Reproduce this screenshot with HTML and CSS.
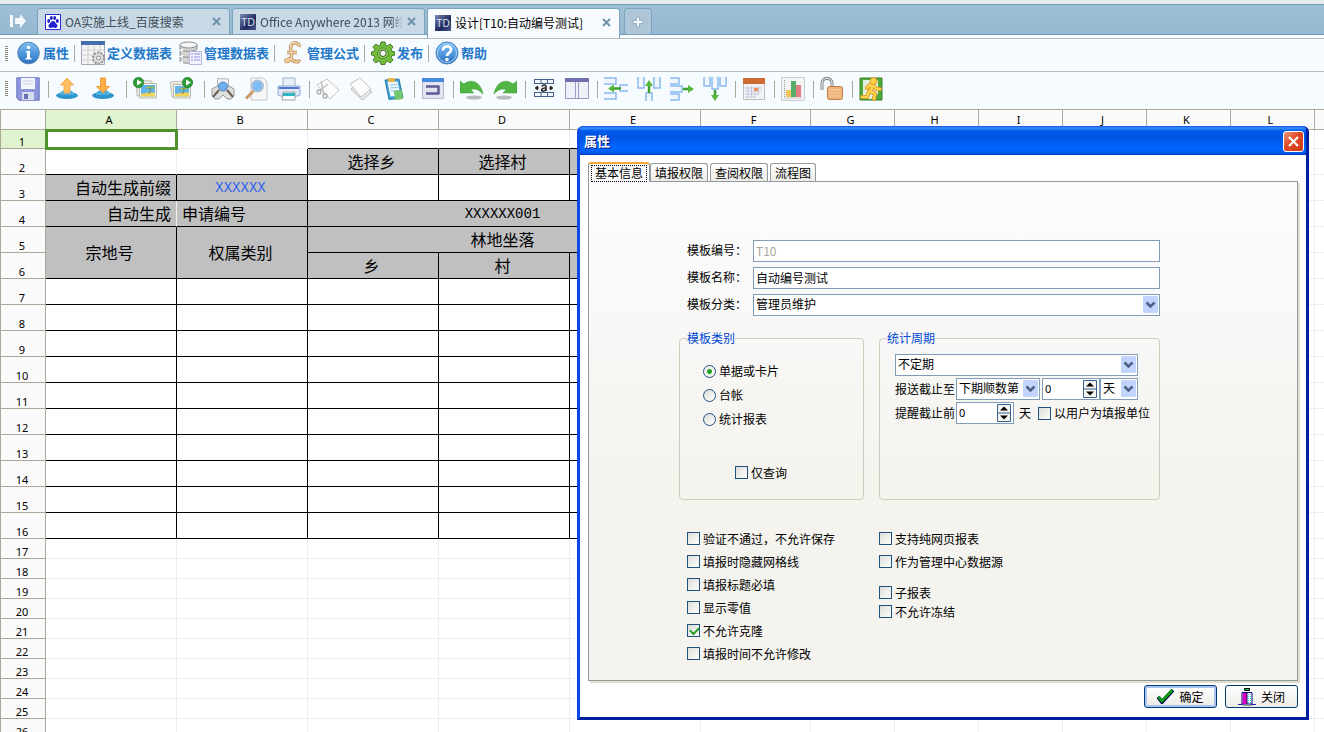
FILE: index.html
```html
<!DOCTYPE html>
<html lang="zh-CN">
<head>
<meta charset="utf-8">
<title>设计[T10:自动编号测试]</title>
<link rel="stylesheet" href="styles.css">
</head>
<body>
<nav class="tabbar">
  <button class="tabbar-toggle" aria-label="展开"><svg width="16" height="14" viewBox="0 0 16 14"><path d="M0 1h3v12H0zM5 4h5V0l6 7-6 7v-4H5z" fill="#f4f8fb"/></svg></button>
  <div class="tab">
    <svg width="16" height="16" viewBox="0 0 16 16"><path fill="#fff" stroke="#2a2ad6" d="M.5.5h15v15H.5z"/><g fill="#2222d0"><ellipse cx="3.7" cy="7" rx="1.5" ry="2"/><ellipse cx="6.3" cy="4" rx="1.5" ry="2"/><ellipse cx="9.7" cy="4" rx="1.5" ry="2"/><ellipse cx="12.3" cy="7" rx="1.5" ry="2"/><path d="M8 7c2 0 2.400 2 3.800 3.300 1.500 1.500.4 3.700-1.300 3.700-1 0-1.500-.4-2.500-.4s-1.500.4-2.500.4c-1.700 0-2.800-2.200-1.300-3.700C5.600 9 6 7 8 7z"/></g></svg>
    <span class="tab-title">OA实施上线_百度搜索</span>
    <button class="tab-close" aria-label="关闭标签"><svg width="9" height="9" viewBox="0 0 9 9"><path d="M1 1l7 7M8 1L1 8" stroke="#6c92aa" stroke-width="2"/></svg></button>
  </div>
  <div class="tab">
    <span class="td-logo">TD</span>
    <span class="tab-title tab-fade">Office Anywhere 2013 网络</span>
    <button class="tab-close" aria-label="关闭标签"><svg width="9" height="9" viewBox="0 0 9 9"><path d="M1 1l7 7M8 1L1 8" stroke="#6c92aa" stroke-width="2"/></svg></button>
  </div>
  <div class="tab tab-active">
    <span class="td-logo">TD</span>
    <span class="tab-title">设计[T10:自动编号测试]</span>
    <button class="tab-close" aria-label="关闭标签"><svg width="9" height="9" viewBox="0 0 9 9"><path d="M1 1l7 7M8 1L1 8" stroke="#6c92aa" stroke-width="2"/></svg></button>
  </div>
  <button class="tab-new" aria-label="新标签"><svg width="12" height="12" viewBox="0 0 12 12"><path d="M4.500 1h3v3.500H11v3H7.500V11h-3V7.500H1v-3h3.500z" fill="#f1f6fa" stroke="#7896ab" stroke-width=".6"/></svg></button>
</nav>

<div class="toolbar toolbar-text">
  <span class="grip"></span>
  <button class="tool"><svg class="icon" viewBox="0 0 24 24"><defs><linearGradient id="blue" x1="0" y1="0" x2="0" y2="1"><stop offset="0" stop-color="#7cc0f4"/><stop offset="1" stop-color="#2a72c4"/></linearGradient></defs><circle cx="11.500" cy="12" r="10.800" fill="url(#blue)" stroke="#5a84ae"/><circle cx="11.500" cy="6.500" r="1.800" fill="#fff"/><path d="M9 10h4v7h1.500v1.500h-6V17H10v-5.500H9z" fill="#fff"/></svg>属性</button>
  <span class="sep"></span>
  <button class="tool"><svg class="icon" viewBox="0 0 24 24"><path d="M.5.500h23v23H.5z" fill="#f4f4f4" stroke="#a5acb8"/><path d="M0 0h24v4H0z" fill="#456fae"/><path d="M1 9h22M1 14h22M1 19h22M7 4v19M13 4v19M19 4v19" stroke="#cfcfcf"/><g transform="translate(17.500 17)"><circle r="5.500" fill="#cfcfcf" stroke="#8d8d8d" stroke-width="2" stroke-dasharray="2 1.400"/><circle r="4.500" fill="#dedede"/><circle r="2" fill="#f6f6f6" stroke="#8a8a8a"/></g></svg>定义数据表</button>
  <button class="tool"><svg class="icon" viewBox="0 0 24 24"><g fill="#d3d3d3" stroke="#8c8c8c"><path d="M2 16v4c0 3 17 3 17 0v-4"/><path d="M2 10v4c0 3 17 3 17 0v-4"/><path d="M2 4v4c0 3 17 3 17 0V4"/><ellipse cx="10.500" cy="4" rx="8.500" ry="3" fill="#f5f5f5"/></g><path d="M4 8v2M4 14v2M4 20v2" stroke="#fff" stroke-width="2"/><path d="M11.500 10.500h12v13h-12z" fill="#f3f3ff" stroke="#b5b5df"/><path d="M13 13h2M13 16h2M13 19h2M16 13h6M16 16h6M16 19h6" stroke="#8d8de0"/></svg>管理数据表</button>
  <span class="sep"></span>
  <button class="tool"><svg class="icon" viewBox="0 0 24 24"><path d="M18 6c1-5-8-6-8.500 0 0 4 2.500 7 .5 11-1 2-4 5-5 3s4-3 7-.5c3 2 6 2 6-1M6 11.500h10" fill="none" stroke="#b08250" stroke-width="3.400"/><path d="M18 6c1-5-8-6-8.500 0 0 4 2.500 7 .5 11-1 2-4 5-5 3s4-3 7-.5c3 2 6 2 6-1M6 11.500h10" fill="none" stroke="#f2cd9d" stroke-width="2"/></svg>管理公式</button>
  <span class="sep"></span>
  <button class="tool"><svg class="icon" viewBox="0 0 24 24"><path d="M10 1h4l.6 3 2 .8L19.200 3 22 5.800l-1.800 2.600.8 2 3 .6v3l-3 .6-.8 2 1.800 2.600-2.800 2.800-2.600-1.800-2 .8-.6 2.500h-4l-.6-2.500-2-.8L4.800 22 2 19.200l1.800-2.600-.8-2-2.500-.6v-3l2.500-.6.8-2L2 5.800 4.800 3l2.600 1.800 2-.8z" fill="#72bb3c" stroke="#447a2a"/><circle cx="12" cy="12.300" r="5.500" fill="#8ed052" stroke="#4a8a2e"/><circle cx="12" cy="12.300" r="3.200" fill="#f6fbff" stroke="#36561f"/></svg>发布</button>
  <span class="sep"></span>
  <button class="tool"><svg class="icon" viewBox="0 0 24 24"><circle cx="12" cy="12" r="11" fill="url(#blue)" stroke="#4b83bd"/><circle cx="12" cy="12" r="9.500" fill="none" stroke="#a8d7f7"/><path d="M8 9.500C7.500 4 16.500 4 16 9c-.2 3-4 3-4 6" fill="none" stroke="#fff" stroke-width="2.800"/><circle cx="12" cy="18.500" r="1.700" fill="#fff"/></svg>帮助</button>
</div>

<div class="toolbar toolbar-icons">
  <span class="grip"></span>
  <div class="group group-first">
    <button class="ibtn" aria-label="保存"><svg class="icon" viewBox="0 0 24 24"><path d="M.8.800h22.400v22.400H3L.8 21z" fill="#8f97dc" stroke="#6c74bd"/><path d="M5 1h14v11H5z" fill="#f4f6fb"/><path d="M7 4h10M7 7h10" stroke="#c9cfe4"/><path d="M6 15h12v8H6z" fill="#d9dcee"/><path d="M8 17h4v5H8z" fill="#6770b4"/></svg></button>
  </div>
  <div class="group">
    <button class="ibtn ibtn-wide" aria-label="上传"><svg class="icon" viewBox="0 0 24 24"><ellipse cx="12" cy="18.500" rx="11" ry="3.500" fill="#2d93cb"/><path d="M5 18c0-7 14-7 14 0" fill="#4fb0e2"/><path d="M12 1l6.500 7H15v8H9V8H5.500z" fill="#ffbf62" stroke="#f3a23d" stroke-width=".8"/></svg></button>
    <button class="ibtn ibtn-wide" aria-label="下载"><svg class="icon" viewBox="0 0 24 24"><ellipse cx="12" cy="18.500" rx="11" ry="3.500" fill="#2d93cb"/><path d="M5 18c0-7 14-7 14 0" fill="#4fb0e2"/><path d="M9.500 1h5v8.500h4L12 16 5.500 9.500h4z" fill="#ffad45" stroke="#ee8e22" stroke-width=".8"/></svg></button>
  </div>
  <div class="group">
    <button class="ibtn ibtn-wide" aria-label="导入图片"><svg class="icon" viewBox="0 0 24 24"><path d="M3 3l16 1-1 14-14 1z" fill="#e9e9e2" stroke="#c4c4bc"/><path d="M6.500 6.500h17V21h-17z" fill="#f6f6f0" stroke="#b8b8b0"/><path d="M8 8h14v11.500H8z" fill="#62b4ec"/><path d="M8 17c5-1 10-2 14-1v3.500H8z" fill="#f0d358"/><path d="M17.500 11c0 2-.5 4-1.500 6" stroke="#7c7a2c" fill="none"/><path d="M13.500 12c.5-3 3-3 4-1.500 1-2 3.500-1 3.500 1-1.500-1-2.500-1-3.500-.5-1-.5-2.500 0-4 1z" fill="#d9e04a" stroke="#6d8f2a" stroke-width=".5"/><circle cx="5.500" cy="5.500" r="5.200" fill="#2c9d35" stroke="#167522" stroke-width=".6"/><path d="M4 2.500l5 3-5 3z" fill="#fff"/></svg></button>
    <button class="ibtn ibtn-wide" aria-label="导出图片"><svg class="icon" viewBox="0 0 24 24"><path d="M1 5l16-1v14L3 20z" fill="#e9e9e2" stroke="#c4c4bc"/><path d="M4.500 7.500h17V21h-17z" fill="#f6f6f0" stroke="#b8b8b0"/><path d="M6 9h14v10.500H6z" fill="#62b4ec"/><path d="M6 17c5-1 10-2 14-1v3.500H6z" fill="#f0d358"/><path d="M15 12c0 2-.5 3-1.500 5" stroke="#7c7a2c" fill="none"/><path d="M11 13c.5-3 3-3 4-1.500 1-2 3.500-1 3.500 1-1.500-1-2.500-1-3.500-.5-1-.5-2.500 0-4 1z" fill="#d9e04a" stroke="#6d8f2a" stroke-width=".5"/><circle cx="18.500" cy="5.500" r="5.200" fill="#2c9d35" stroke="#167522" stroke-width=".6"/><path d="M17 2.500l5 3-5 3z" fill="#fff"/></svg></button>
  </div>
  <div class="group">
    <button class="ibtn" aria-label="打印预览"><svg class="icon" viewBox="0 0 24 24"><path d="M1 12l5-3h12l5 3v7l-3 3h-4l-4-4-4 4H4l-3-3z" fill="#dedede" stroke="#9a9a9a"/><path d="M6.500 10V1.500L17.500 2v8z" fill="#f4f4f4" stroke="#b5b5b5"/><path d="M8 13l-6 7M16 13l6 7" stroke="#6b5c54" stroke-width="2"/><circle cx="12" cy="9.500" r="4.500" fill="#6eaff0" stroke="#5580b5"/></svg></button>
    <button class="ibtn" aria-label="查找"><svg class="icon" viewBox="0 0 24 24"><path d="M7 1h12l4 4v18H7z" fill="#f6f6f6" stroke="#c5c5c5"/><circle cx="13.500" cy="9" r="5.500" fill="#7ebcf5" stroke="#a9bed6" stroke-width="2"/><path d="M9.500 14L2 21.500" stroke="#c99b66" stroke-width="3"/></svg></button>
    <button class="ibtn" aria-label="打印"><svg class="icon" viewBox="0 0 24 24"><path d="M6 9V1h12v8" fill="#e7effa" stroke="#a0aec5"/><path d="M1 9h22v9c0 2-22 2-22 0z" fill="#dee8fb" stroke="#92a8d5"/><path d="M2 10h20v2H2z" fill="#5675c6"/><path d="M6 15h12v8H5z" fill="#fafafa" stroke="#a3a3a3"/><path d="M6 16h12v3H6z" fill="#2fb4c4"/></svg></button>
  </div>
  <div class="group">
    <button class="ibtn" aria-label="剪切"><svg class="icon" viewBox="0 0 24 24"><path d="M1 8l10-6 12 11-9 9z" fill="#fcfcfc" stroke="#c6c6c6"/><path d="M5 4l3 13M12 7L3 14" stroke="#bbb" stroke-width="1.300"/><circle cx="3" cy="15" r="2" fill="none" stroke="#a8a8a8" stroke-width="1.300"/><circle cx="9" cy="19" r="2" fill="none" stroke="#a8a8a8" stroke-width="1.300"/></svg></button>
    <button class="ibtn" aria-label="复制"><svg class="icon" viewBox="0 0 24 24"><path d="M2 12l9-7 12 10-10 8z" fill="#ececec" stroke="#bbb"/><path d="M1 7l10-6 11 11-10 8z" fill="#fcfcfc" stroke="#c0c0c0"/></svg></button>
    <button class="ibtn" aria-label="粘贴"><svg class="icon" viewBox="0 0 24 24"><path d="M3 3l14-1 4 19-14 1.500z" fill="#3f9fd2" stroke="#2d7eab"/><path d="M5.500 5l10-.5 3 14-10 1z" fill="#eefaff"/><path d="M8 8l7-.5M8 11l8-.5M9 14l8-.5" stroke="#86c4dd"/><path d="M6 1h7v4H6z" fill="#e8b548"/><path d="M12 14l8-1 1 9-8 1z" fill="#72c66c"/></svg></button>
  </div>
  <div class="group">
    <button class="ibtn" aria-label="换行"><svg class="icon" viewBox="0 0 24 24"><path d="M1.500 1.500h21v20h-21z" fill="#e1e5ef" stroke="#b2bdcf"/><path d="M1 1h22v4H1z" fill="#4589dc"/><path d="M5 9.500h12.500v7H5" fill="none" stroke="#5d5c94" stroke-width="2.500" stroke-linejoin="round"/></svg></button>
  </div>
  <div class="group">
    <button class="ibtn" aria-label="撤销"><svg class="icon" viewBox="0 0 24 24"><ellipse cx="14" cy="20.500" rx="8" ry="2" fill="#b8bcc0"/><path d="M0 4l4 3c7-6 17-2 19 10-5-5-9-6-12-4l3 3H0z" fill="#50b543" stroke="#3f9d35" stroke-width=".5"/></svg></button>
    <button class="ibtn" aria-label="重做"><svg class="icon" viewBox="0 0 24 24"><ellipse cx="11" cy="20.500" rx="8" ry="2" fill="#b8bcc0"/><path d="M24 4l-4 3C13 1 3 5 1 17c5-5 9-6 12-4l-3 3h14z" fill="#50b543" stroke="#3f9d35" stroke-width=".5"/></svg></button>
  </div>
  <div class="group">
    <button class="ibtn" aria-label="合并单元格"><svg class="icon" viewBox="0 0 24 24"><path d="M2 2h20v18H2z" fill="#f1f5fb"/><path d="M2 2.500h20M2 6.500h20M2 15.500h20M2 19.500h20M2.500 2v4.500M9 2v4.500M15.500 2v4.500M21.500 2v4.500M2.500 15.500v4M9 15.500v4M15.500 15.500v4M21.500 15.500v4" stroke="#49608a"/><path d="M3 11h4M17 11h4M3.500 11l2-2v4zM20.500 11l-2-2v4z" fill="#222" stroke="#222"/><path d="M14 14V9.500c0-2-3.500-2-4 0M14 11c-5-.5-5.500 3-3 3 2 0 3-1 3-2" fill="none" stroke="#222" stroke-width="1.500"/></svg></button>
    <button class="ibtn" aria-label="拆分"><svg class="icon" viewBox="0 0 24 24"><path d="M.5 1.500h23v20H.5z" fill="#eef1f8" stroke="#999bc5"/><path d="M0 1h24v4H0z" fill="#6f71b2"/><path d="M10.500 5v16M13.500 5v16" stroke="#9a9bc8"/></svg></button>
  </div>
  <div class="group">
    <button class="ibtn" aria-label="插入行"><svg class="icon" viewBox="0 0 24 24"><g fill="#f0f6fc" stroke="#8bbcf0" stroke-width="1.500"><path d="M0 1h12v6H0M0 16h12v6H0M24 8h-8v6h8"/></g><path d="M17 11.500H9" stroke="#3da32f" stroke-width="2.500"/><path d="M4 11.500l6-4v8z" fill="#55b83a"/></svg></button>
    <button class="ibtn" aria-label="插入列"><svg class="icon" viewBox="0 0 24 24"><g fill="#f0f6fc" stroke="#8bbcf0" stroke-width="1.500"><path d="M1 0v11h6V0M17 0v11h6V0M9 24v-8h6v8"/></g><path d="M12 16V8" stroke="#3da32f" stroke-width="2.500"/><path d="M12 3l-4 6h8z" fill="#55b83a"/></svg></button>
    <button class="ibtn" aria-label="删除行"><svg class="icon" viewBox="0 0 24 24"><g fill="#f0f6fc" stroke="#8bbcf0" stroke-width="1.500"><path d="M0 1h9v6H0M0 9h12v6H0M0 17h9v6H0"/></g><path d="M13 12h6" stroke="#3da32f" stroke-width="2.500"/><path d="M24 12l-6-4v8z" fill="#55b83a"/></svg></button>
    <button class="ibtn" aria-label="删除列"><svg class="icon" viewBox="0 0 24 24"><g fill="#f0f6fc" stroke="#8bbcf0" stroke-width="1.500"><path d="M1 0v9h6V0M9 0v12h6V0M17 0v9h6V0"/></g><path d="M12 13v6" stroke="#3da32f" stroke-width="2.500"/><path d="M12 24l-4-6h8z" fill="#55b83a"/></svg></button>
  </div>
  <div class="group">
    <button class="ibtn" aria-label="日期"><svg class="icon" viewBox="0 0 24 24"><path d="M1.500 1.500h21v21h-21z" fill="#f3f3f3" stroke="#bdbdbd"/><path d="M1 1h22v6H1z" fill="#cf6a35"/><path d="M3 11h17M3 14h17M3 17h14M3 20h11M6 9v11M9.500 9v11M13 9v11M16.500 9v9" stroke="#c3c8e2"/><path d="M12 11h4v3h-4z" fill="#f59057"/></svg></button>
  </div>
  <div class="group">
    <button class="ibtn" aria-label="图表"><svg class="icon" viewBox="0 0 24 24"><path d="M.5.500h23v23H.5z" fill="#f3f5f5" stroke="#c7cccc"/><path d="M3.500 3v18H21" stroke="#999" fill="none" stroke-dasharray="1 1"/><path d="M5 13h5v7H5z" fill="#f3c45b"/><path d="M10 4h5v16h-5z" fill="#55ad68"/><path d="M15 8h5v12h-5z" fill="#e57d87"/></svg></button>
  </div>
  <div class="group">
    <button class="ibtn" aria-label="解锁"><svg class="icon" viewBox="0 0 24 24"><path d="M2 13V6c0-6 10-6 10 0v4" fill="none" stroke="#808080" stroke-width="3"/><path d="M2 13V6c0-6 10-6 10 0v4" fill="none" stroke="#e7e7e7" stroke-width="1.200"/><rect x="7.500" y="9.500" width="15" height="13" rx="2" fill="#eeb37a" stroke="#c17d44"/><path d="M9 13h12M9 16h12M9 19h12" stroke="#f8d0a5"/></svg></button>
  </div>
  <div class="group">
    <button class="ibtn" aria-label="退出"><svg class="icon" viewBox="0 0 24 24"><path d="M1 1h22v22H1z" fill="#4fa83a" stroke="#39822a"/><path d="M4 3h15v14l-6 5H4z" fill="#e4eee0"/><g stroke="#d78d18" stroke-width="4" fill="none" stroke-linecap="round" stroke-linejoin="round"><path d="M14 9l-3 5 5 3-1 5M10 15l-2 5H3M8 11l3-3 4 1 2 3h4"/></g><g stroke="#ffd24c" stroke-width="2.600" fill="none" stroke-linecap="round" stroke-linejoin="round"><path d="M14 9l-3 5 5 3-1 5M10 15l-2 5H3M8 11l3-3 4 1 2 3h4"/></g><circle cx="14.500" cy="4" r="3.500" fill="#ffd24c" stroke="#d78d18" stroke-width=".8"/></svg></button>
  </div>
</div>

<main class="sheet">
<table class="grid">
<colgroup><col class="c-head"><col class="c-wide" span="5"><col class="c-mid"><col class="c-std" span="7"></colgroup>
<thead><tr><th><th class="on">A<th>B<th>C<th>D<th>E<th>F<th>G<th>H<th>I<th>J<th>K<th>L<th></tr></thead>
<tbody>
<tr class="r1"><th class="on">1<td class="sel"><td><td class="kb"><td class="kb"><td class="kb"><td><td><td><td><td><td><td><td></tr>
<tr class="r"><th>2<td class="kb"><td class="kb kr"><td class="k g">选择乡<td class="k g">选择村<td class="k g"><td><td><td><td><td><td><td><td></tr>
<tr class="r"><th>3<td class="k g right">自动生成前缀<td class="k g code link">XXXXXX<td class="k"><td class="k"><td class="k"><td><td><td><td><td><td><td><td></tr>
<tr class="r"><th>4<td class="kb g right">自动生成<td class="k g left">申请编号<td class="k g code" colspan="3">XXXXXX001<td><td><td><td><td><td><td><td></tr>
<tr class="r"><th>5<td class="k g" rowspan="2">宗地号<td class="k g" rowspan="2">权属类别<td class="k g" colspan="3">林地坐落<td><td><td><td><td><td><td><td></tr>
<tr class="r"><th>6<td class="k g">乡<td class="k g">村<td class="k g"><td><td><td><td><td><td><td><td></tr>
<tr class="r"><th>7<td class="k"><td class="k"><td class="k"><td class="k"><td class="k"><td><td><td><td><td><td><td><td></tr>
<tr class="r"><th>8<td class="k"><td class="k"><td class="k"><td class="k"><td class="k"><td><td><td><td><td><td><td><td></tr>
<tr class="r"><th>9<td class="k"><td class="k"><td class="k"><td class="k"><td class="k"><td><td><td><td><td><td><td><td></tr>
<tr class="r"><th>10<td class="k"><td class="k"><td class="k"><td class="k"><td class="k"><td><td><td><td><td><td><td><td></tr>
<tr class="r"><th>11<td class="k"><td class="k"><td class="k"><td class="k"><td class="k"><td><td><td><td><td><td><td><td></tr>
<tr class="r"><th>12<td class="k"><td class="k"><td class="k"><td class="k"><td class="k"><td><td><td><td><td><td><td><td></tr>
<tr class="r"><th>13<td class="k"><td class="k"><td class="k"><td class="k"><td class="k"><td><td><td><td><td><td><td><td></tr>
<tr class="r"><th>14<td class="k"><td class="k"><td class="k"><td class="k"><td class="k"><td><td><td><td><td><td><td><td></tr>
<tr class="r"><th>15<td class="k"><td class="k"><td class="k"><td class="k"><td class="k"><td><td><td><td><td><td><td><td></tr>
<tr class="r"><th>16<td class="k"><td class="k"><td class="k"><td class="k"><td class="k"><td><td><td><td><td><td><td><td></tr>
<tr><th>17<td><td><td><td><td><td><td><td><td><td><td><td><td></tr>
<tr><th>18<td><td><td><td><td><td><td><td><td><td><td><td><td></tr>
<tr><th>19<td><td><td><td><td><td><td><td><td><td><td><td><td></tr>
<tr><th>20<td><td><td><td><td><td><td><td><td><td><td><td><td></tr>
<tr><th>21<td><td><td><td><td><td><td><td><td><td><td><td><td></tr>
<tr><th>22<td><td><td><td><td><td><td><td><td><td><td><td><td></tr>
<tr><th>23<td><td><td><td><td><td><td><td><td><td><td><td><td></tr>
<tr><th>24<td><td><td><td><td><td><td><td><td><td><td><td><td></tr>
<tr><th>25<td><td><td><td><td><td><td><td><td><td><td><td><td></tr>
<tr><th>26<td><td><td><td><td><td><td><td><td><td><td><td><td></tr>
</tbody>
</table>
</main>

<section class="dialog" role="dialog" aria-labelledby="dlg-title">
  <header class="dlg-head">
    <h1 class="dlg-title" id="dlg-title">属性</h1>
    <button class="dlg-close" aria-label="关闭窗口"><svg width="13" height="13" viewBox="0 0 13 13"><path d="M2 2l9 9M11 2l-9 9" stroke="#fff" stroke-width="2.200"/></svg></button>
  </header>
  <div class="dlg-body">
    <div class="dtabs">
      <button class="dtab dtab-on"><span class="focus">基本信息</span></button>
      <button class="dtab">填报权限</button>
      <button class="dtab">查阅权限</button>
      <button class="dtab">流程图</button>
    </div>
    <form class="panel">
      <div class="fields">
        <label class="flabel" for="code">模板编号：</label><input class="box muted" id="code" type="text" value="T10" disabled>
        <label class="flabel" for="name">模板名称：</label><input class="box" id="name" type="text" value="自动编号测试">
        <label class="flabel" for="cat">模板分类：</label><span class="drop"><select class="box" id="cat"><option>管理员维护</option></select><svg class="arrow" viewBox="0 0 15 17"><rect width="15" height="17" rx="1" fill="#c2d3fc"/><path d="M3.500 6.500l4 4 4-4" fill="none" stroke="#4d6185" stroke-width="2.500"/></svg></span>
      </div>
      <div class="sets">
        <fieldset class="set">
          <legend>模板类别</legend>
          <div class="radios">
            <label class="opt"><input type="radio" name="kind" checked>单据或卡片</label>
            <label class="opt"><input type="radio" name="kind">台帐</label>
            <label class="opt"><input type="radio" name="kind">统计报表</label>
          </div>
          <label class="opt opt-query"><input type="checkbox">仅查询</label>
        </fieldset>
        <fieldset class="set">
          <legend>统计周期</legend>
          <div class="period">
            <div class="prow"><span class="drop drop-full"><select class="box" aria-label="统计周期"><option>不定期</option></select><svg class="arrow" viewBox="0 0 15 17"><rect width="15" height="17" rx="1" fill="#c2d3fc"/><path d="M3.500 6.500l4 4 4-4" fill="none" stroke="#4d6185" stroke-width="2.500"/></svg></span></div>
            <div class="prow"><label class="plabel" for="due">报送截止至</label><span class="drop drop-mid"><select class="box" id="due"><option>下期顺数第</option></select><svg class="arrow" viewBox="0 0 15 17"><rect width="15" height="17" rx="1" fill="#c2d3fc"/><path d="M3.500 6.500l4 4 4-4" fill="none" stroke="#4d6185" stroke-width="2.500"/></svg></span><span class="drop drop-num"><input class="box num" type="number" value="0" aria-label="截止天数"><svg class="spin" viewBox="0 0 14 18"><path d="M.5.500h13v17H.5zM0 9h14" fill="#f4f4f0" stroke="#37618a"/><path d="M7 2.500l4 4H3zM7 15.500l4-4H3z"/></svg></span><span class="drop drop-unit"><select class="box" aria-label="单位"><option>天</option></select><svg class="arrow" viewBox="0 0 15 17"><rect width="15" height="17" rx="1" fill="#c2d3fc"/><path d="M3.500 6.500l4 4 4-4" fill="none" stroke="#4d6185" stroke-width="2.500"/></svg></span></div>
            <div class="prow"><label class="plabel" for="remind">提醒截止前</label><span class="drop drop-num"><input class="box num" id="remind" type="number" value="0"><svg class="spin" viewBox="0 0 14 18"><path d="M.5.500h13v17H.5zM0 9h14" fill="#f4f4f0" stroke="#37618a"/><path d="M7 2.500l4 4H3zM7 15.500l4-4H3z"/></svg></span><span class="unit">天</span><label class="opt"><input type="checkbox">以用户为填报单位</label></div>
          </div>
        </fieldset>
      </div>
      <div class="checks">
        <div class="checkcol">
          <label class="opt"><input type="checkbox">验证不通过，不允许保存</label>
          <label class="opt"><input type="checkbox">填报时隐藏网格线</label>
          <label class="opt"><input type="checkbox">填报标题必填</label>
          <label class="opt"><input type="checkbox">显示零值</label>
          <label class="opt"><input type="checkbox" checked>不允许克隆</label>
          <label class="opt"><input type="checkbox">填报时间不允许修改</label>
        </div>
        <div class="checkcol">
          <label class="opt"><input type="checkbox">支持纯网页报表</label>
          <label class="opt"><input type="checkbox">作为管理中心数据源</label>
          <div class="tight">
            <label class="opt"><input type="checkbox">子报表</label>
            <label class="opt"><input type="checkbox">不允许冻结</label>
          </div>
        </div>
      </div>
    </form>
    <footer class="actions">
      <button class="act act-default"><svg width="17" height="15" viewBox="0 0 17 15"><path d="M1 8l4 5L16 1" fill="none" stroke="#005" stroke-width="3.800"/><path d="M1.500 8l3.500 4L15.500 1" fill="none" stroke="#0a9a14" stroke-width="2.800"/></svg>确定</button>
      <button class="act"><svg width="18" height="18" viewBox="0 0 18 18"><path d="M4 4.500h10V16H4z" fill="#fff" stroke="#007"/><path d="M4.500 5H9v11H4.500z" fill="#d400c4"/><path d="M10.500 6v10M12.500 6v10" stroke="#2ed3e6" stroke-dasharray="1 1"/><path d="M9 16V5" stroke="#115"/><path d="M0 16.500h5M13 16.500h5" stroke="#22a"/><path d="M5 17.500h9" stroke="#999"/><path d="M6.500.500h5v2h-5z" fill="#12c83c" stroke="#000"/></svg>关闭</button>
    </footer>
  </div>
</section>
</body>
</html>
```
FILE: styles.css
```css
* { box-sizing: border-box; }
body {
  margin: 0;
  height: 100vh;
  overflow: hidden;
  display: flex;
  flex-direction: column;
  background: #fff;
  color: #000;
  font: 12px/16px "Noto Sans CJK SC", sans-serif;
}
button, input, select { font: inherit; color: inherit; }
button { border: 0; padding: 0; background: none; }
svg { display: block; flex: none; }

/* browser tabs */
.tabbar {
  flex: none;
  display: flex;
  gap: 2px;
  height: 39px;
  padding-top: 4px;
  border-top: 4px solid #e9ebed;
  border-bottom: 1px solid #b4bcc0;
  background: linear-gradient(#6a9dba 1px, #9fbfd5 1px, #97b8cf 30px, #6a9dba 30px, #6a9dba 31px, #f9fcfe 31px);
}
.tabbar-toggle { width: 35px; height: 26px; display: flex; align-items: center; justify-content: center; }
.tab {
  display: flex;
  align-items: center;
  gap: 4px;
  width: 193px;
  height: 27px;
  padding: 0 8px 0 7px;
  border: 1px solid #7aa5c0;
  border-radius: 3px 3px 0 0;
  background: #c8d8e5;
  color: #3d4c57;
}
.tab-active { height: 30px; padding-bottom: 2px; border-bottom: 0; background: #f7fbfe; color: #000; }
.tab-title { flex: 1; overflow: hidden; white-space: nowrap; }
.tab-fade { mask-image: linear-gradient(to left, transparent, #000 12px); }
.tab-close { width: 9px; height: 9px; }
.tab-new {
  width: 28px;
  height: 27px;
  margin-left: 2px;
  display: flex;
  align-items: center;
  justify-content: center;
  border: 1px solid #7aa5c0;
  border-radius: 3px;
  background: #adc6d8;
}
.td-logo {
  width: 16px;
  height: 16px;
  background: linear-gradient(135deg, #7d88b4, #1c2a5e 60%, #4a5a90);
  color: #dde2f0;
  font: 10px/17px "Liberation Sans", sans-serif;
  text-align: center;
}

/* toolbars */
.toolbar { flex: none; display: flex; align-items: center; padding-left: 5px; background: #f6fbff; }
.toolbar-text { height: 33px; padding-bottom: 3px; border-bottom: 1px solid #b4bcc0; }
.toolbar-icons { height: 37px; padding-bottom: 3px; }
.grip {
  width: 3px;
  height: 16px;
  background: repeating-linear-gradient(#8b8877 0 1px, transparent 1px 2px);
}
.icon { width: 24px; height: 24px; }
.tool {
  display: flex;
  align-items: center;
  gap: 2px;
  margin-left: 6px;
  padding-bottom: 1px;
  color: #2277c9;
  font-size: 13px;
  font-weight: bold;
}
.grip + .tool { margin-left: 9px; }
.sep { width: 1px; height: 17px; margin-left: 5px; background: #aca899; }
.group { display: flex; align-items: center; gap: 9px; padding: 0 8px 0 7px; position: relative; }
.group::before { content: ""; position: absolute; left: 0; top: 4px; width: 1px; height: 17px; background: #aca899; }
.group-first { padding-left: 8px; }
.group-first::before { display: none; }
.ibtn-wide { width: 27px; }

/* spreadsheet */
.sheet { flex: 1; min-height: 0; overflow: hidden; border-top: 1px solid #aca899; border-left: 1px solid #aca899; }
.grid { table-layout: fixed; width: 1398px; border-spacing: 0; }
.c-head { width: 45px; }
.c-wide { width: 131px; }
.c-mid { width: 110px; }
.c-std { width: 84px; }
.grid th, .grid td { height: 20px; padding: 0; border-right: 1px solid #ededed; border-bottom: 1px solid #ededed; }
.grid th {
  padding-top: 6px;
  padding-right: 2px;
  border-color: #aca899;
  background: #fafafa;
  font: 11px/13px "Noto Sans", sans-serif;
  text-align: center;
}
.grid thead th { padding: 0 4px 0 0; }
.grid .r th { padding-top: 12px; }
.grid th.on { background: #dff3ce; }
.grid .r1 th, .grid .r1 td { height: 19px; }
.grid .r1 th { padding-top: 5px; }
.grid .r th, .grid .r td { height: 26px; }
.grid td { padding: 0 3px 2px 0; font-size: 16px; line-height: 20px; text-align: center; white-space: nowrap; }
.grid .k { border-color: #000; }
.grid .kb { border-bottom-color: #000; }
.grid .kr { border-right-color: #000; }
.grid .g { background: #c0c0c0; }
.grid .right { padding-right: 5px; text-align: right; }
.grid .left { padding-left: 5px; text-align: left; }
.grid .code { padding-bottom: 0; font-family: "Liberation Mono", monospace; font-size: 14px; }
.grid .link { color: #2f63f0; }
.grid .sel { outline: 3px solid #4f922b; outline-offset: -2px; }

/* dialog window */
.dialog {
  position: absolute;
  left: 577px;
  top: 126px;
  width: 732px;
  border: solid #0831d9;
  border-width: 0 3px 3px;
  border-color: #0831d9 #001ea0 #001ea0 #0a4be4;
  border-radius: 6px 6px 0 0;
  background: #0050e6;
}
.dlg-head {
  display: flex;
  align-items: center;
  justify-content: space-between;
  height: 29px;
  padding: 2px 2px 0 4px;
  border-radius: 4px 4px 0 0;
  background: linear-gradient(#0a50d8, #3b93ff 2px, #0058e8 5px, #0054e3 12px, #0066ff 22px, #0062fb 25px, #0043cf);
}
.dlg-title { margin: 0; padding-bottom: 2px; color: #fff; font-size: 13px; line-height: 18px; text-shadow: 1px 1px #0a1883; }
.dlg-close {
  display: flex;
  align-items: center;
  justify-content: center;
  width: 21px;
  height: 21px;
  border: 1px solid #fff;
  border-radius: 3px;
  background: linear-gradient(135deg, #ee9a82, #df4a24 45%, #cb3a14);
}
.dlg-body { padding: 7px 8px 9px; background: #fff; }
.dtabs { display: flex; align-items: flex-end; gap: 2px; }
.dtab {
  height: 18px;
  padding: 0 4px;
  border: 1px solid #919b9c;
  border-bottom: 0;
  border-radius: 3px 3px 0 0;
  background: linear-gradient(#fff, #ecebe6);
  line-height: 16px;
}
.dtab-on {
  height: 20px;
  margin-right: -2px;
  margin-bottom: -1px;
  padding: 0 2px;
  border-top: 2px solid #f5a833;
  background: #fcfcfe;
  z-index: 1;
}
.focus { display: block; padding: 0 3px 2px; border: 1px dotted #000; line-height: 13px; }
.panel {
  padding: 58px 137px 15px 90px;
  border: 1px solid #919b9c;
  box-shadow: 2px 2px #e2decd;
  background: linear-gradient(#fcfcfe, #f4f3ee 60%);
}
.fields {
  display: grid;
  grid-template-columns: 66px 1fr;
  gap: 5px 0;
  align-items: center;
  padding-left: 8px;
}
.flabel { padding-bottom: 2px; font-family: "Noto Sans CJK TC", sans-serif; }
.box {
  display: block;
  width: 100%;
  height: 22px;
  margin: 0;
  padding: 0 2px 2px;
  border: 1px solid #7f9db9;
  border-radius: 0;
  background: #fff;
  line-height: 18px;
  appearance: none;
  outline: 0;
}
.muted { color: #aca899; }
.drop { position: relative; display: block; }
.arrow { position: absolute; right: 2px; top: 2px; width: 15px; height: 17px; pointer-events: none; }
.sets { display: grid; grid-template-columns: 185px 1fr; gap: 15px; margin-top: 15px; }
.set {
  min-width: 0;
  height: 169px;
  margin: 0;
  padding: 0;
  border: 1px solid #cfcebc;
  border-radius: 4px;
}
.set legend { margin-left: 7px; padding: 0; color: #0046d5; line-height: 14px; }
.opt { display: flex; align-items: center; gap: 3px; height: 23px; white-space: nowrap; }
.opt input { flex: none; appearance: none; width: 13px; height: 13px; margin: 0; border: 1px solid #1c5180; background: linear-gradient(135deg, #dcdcd7, #fff); }
.opt input[type="radio"] { border-radius: 50%; }
.opt input[type="radio"]:checked { background: radial-gradient(circle, #21a121 2px, #f3f3ef 3px); }
.opt input[type="checkbox"]:checked::before {
  content: "";
  display: block;
  width: 7px;
  height: 4px;
  margin: 2px;
  border: solid #21a121;
  border-width: 0 0 2px 2px;
  transform: rotate(-45deg);
}
.radios { padding: 14px 0 0 23px; }
.radios .opt { height: 24px; }
.opt-query { margin: 30px 0 0 55px; }
.period { padding: 8px 0 0 15px; }
.prow { display: flex; align-items: center; height: 24px; }
.plabel { width: 61px; padding-bottom: 1px; }
.drop-full { width: 243px; }
.drop-mid { width: 84px; margin-right: 2px; }
.drop-num { width: 58px; }
.drop-unit { width: 38px; }
.num { padding-right: 18px; font-family: "Noto Sans", sans-serif; font-size: 11px; appearance: textfield; }
.num::-webkit-inner-spin-button { appearance: none; }
.spin { position: absolute; right: 3px; top: 2px; width: 14px; height: 18px; }
.unit { margin: 0 7px 0 5px; }
.checks { display: grid; grid-template-columns: 192px 1fr; margin-top: 27px; padding-left: 8px; }
.tight { padding-top: 10px; }
.tight .opt { height: 19px; }
.actions { display: flex; justify-content: flex-end; gap: 8px; margin-top: 4px; }
.act {
  display: flex;
  align-items: center;
  justify-content: center;
  gap: 5px;
  width: 73px;
  height: 23px;
  border: 1px solid #003c74;
  border-radius: 3px;
  background: linear-gradient(#fff, #ecebe6);
}
.act-default { box-shadow: inset 0 0 0 2px #a9c4f2; }
```
